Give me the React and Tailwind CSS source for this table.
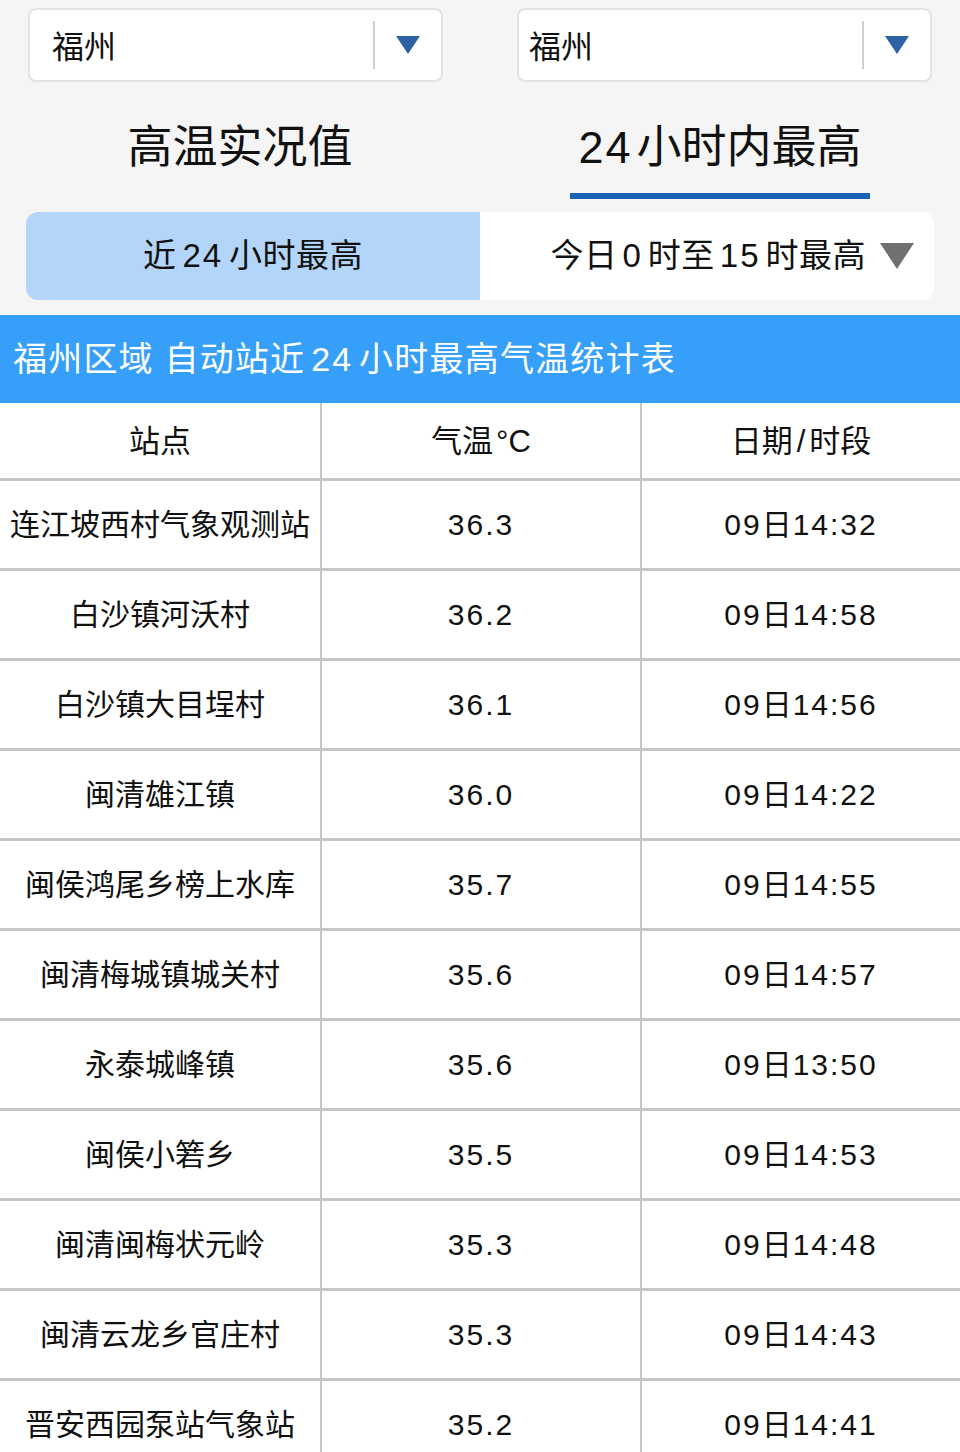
import { useState } from "react";

const rows = [
    ["连江坡西村气象观测站", "36.3", "14:32"],
    ["白沙镇河沃村", "36.2", "14:58"],
    ["白沙镇大目埕村", "36.1", "14:56"],
    ["闽清雄江镇", "36.0", "14:22"],
    ["闽侯鸿尾乡榜上水库", "35.7", "14:55"],
    ["闽清梅城镇城关村", "35.6", "14:57"],
    ["永泰城峰镇", "35.6", "13:50"],
    ["闽侯小箬乡", "35.5", "14:53"],
    ["闽清闽梅状元岭", "35.3", "14:48"],
    ["闽清云龙乡官庄村", "35.3", "14:43"],
    ["晋安西园泵站气象站", "35.2", "14:41"],
];

// 数字单独加间距
function Num({ children, className = "" }) {
    return <span className={"tracking-[2px] " + className}>{children}</span>;
}

function Select({ label, className }) {
    return (
        <div className={"h-[74px] bg-white border-2 border-[#e2e2e2] rounded-lg flex items-center " + className}>
            <span className="flex-1 text-[32px] text-[#111] pt-[3px]">{label}</span>
            <div className="w-[2px] h-[48px] bg-[#cfcfcf]" />
            <div className="w-[66px] flex justify-center">
                <svg width="24" height="18" viewBox="0 0 24 18">
                    <path d="M0 0 L24 0 L12 18 Z" fill="#2d62a6" />
                </svg>
            </div>
        </div>
    );
}

export default function App() {
    const [tab, setTab] = useState(1);

    return (
        <div
            className="w-[960px] min-h-[1452px] bg-[#f5f5f5] overflow-hidden"
            style={{ fontFamily: '"Liberation Sans", "Noto Sans CJK SC", sans-serif' }}
        >
            {/* 下拉选择 */}
            <div className="flex justify-between pt-[8px] pl-[28px] pr-[28px]">
                <Select label="福州" className="w-[415px] pl-[22px]" />
                <Select label="福州" className="w-[415px] pl-[10px]" />
            </div>

            {/* 主标签 */}
            <div className="flex h-[130px]">
                <button onClick={() => setTab(0)} className="w-[480px] flex flex-col items-center pt-[26px]">
                    <span className="text-[45px] leading-[80px] text-[#111]">高温实况值</span>
                </button>
                <button onClick={() => setTab(1)} className="w-[480px] flex flex-col items-center pt-[26px]">
                    <span className="text-[45px] leading-[80px] text-[#111]">
                        <Num className="mr-[4px]">24</Num>小时内最高
                    </span>
                    <div className={"mt-[5px] w-[300px] h-[6px] " + (tab === 1 ? "bg-[#1b63b6]" : "bg-transparent")} />
                </button>
            </div>

            {/* 时段切换 */}
            <div className="mx-[26px] h-[88px] flex rounded-xl overflow-hidden bg-white">
                <div className="w-[454px] bg-[#b3d5f9] flex items-center justify-center text-[33px] text-[#111] tracking-[0.5px]">
                    近<Num className="mx-[6px]">24</Num>小时最高
                </div>
                <div className="flex-1 flex items-center justify-end pr-[20px] gap-[14px] text-[33px] text-[#111] tracking-[0.5px]">
                    <span>
                        今日<Num className="mx-[5px]">0</Num>时至<Num className="mx-[5px]">15</Num>时最高
                    </span>
                    <svg width="34" height="26" viewBox="0 0 34 26">
                        <path d="M0 0 L34 0 L17 26 Z" fill="#707070" />
                    </svg>
                </div>
            </div>

            {/* 表格标题 */}
            <div className="mt-[15px] h-[88px] bg-[#369ffa] flex items-center pl-[13px] text-[34px] text-white tracking-[1.2px]">
                福州区域&nbsp;自动站近<Num className="mx-[6px]">24</Num>小时最高气温统计表
            </div>

            {/* 表格 */}
            <div className="bg-white">
                <div className="flex h-[78px] border-b-[3px] border-[#c6c6c6] text-[31px] text-[#111]">
                    <div className="w-[320px] flex items-center justify-center pt-[4px]">站点</div>
                    <div className="w-[320px] border-l-[2px] border-[#c6c6c6] flex items-center justify-center pt-[4px]">
                        气温<span className="ml-[3px]">°C</span>
                    </div>
                    <div className="flex-1 border-l-[2px] border-[#c6c6c6] flex items-center justify-center pt-[4px]">
                        日期<span className="mx-[4px]">/</span>时段
                    </div>
                </div>
                {rows.map((r, i) => (
                    <div key={i} className="flex h-[90px] border-b-[3px] border-[#c6c6c6] text-[30px] text-[#111]">
                        <div className="w-[320px] flex items-center justify-center whitespace-nowrap">{r[0]}</div>
                        <div className="w-[320px] border-l-[2px] border-[#c6c6c6] flex items-center justify-center">
                            <Num>{r[1]}</Num>
                        </div>
                        <div className="flex-1 border-l-[2px] border-[#c6c6c6] flex items-center justify-center">
                            <Num>09</Num>日<Num className="ml-[1px]">{r[2]}</Num>
                        </div>
                    </div>
                ))}
            </div>
        </div>
    );
}
